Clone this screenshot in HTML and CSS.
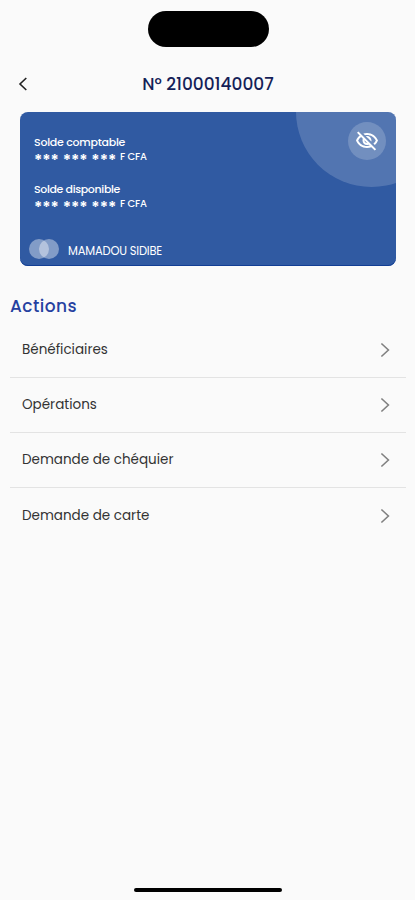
FILE: index.html
```html
<!DOCTYPE html>
<html lang="fr">
<head>
<meta charset="UTF-8">
<meta name="viewport" content="width=device-width, initial-scale=1.0">
<title>N° 21000140007</title>
<link rel="stylesheet" href="styles.css">
</head>
<body>

<div class="screen">
    <div class="island"></div>

    <header class="header">
        <a href="#" class="back" aria-label="Retour">
            <svg width="10" height="14" viewBox="0 0 10 14"><path d="M8.3 1 2 7l6.3 6"/></svg>
        </a>
        <h1>N° 21000140007</h1>
    </header>

    <section class="card">
        <button class="hide-button" aria-label="Afficher le solde">
            <svg width="24" height="24" viewBox="0 0 24 24"><path d="M12 6c3.79 0 7.17 2.13 8.82 5.5-.59 1.22-1.42 2.27-2.41 3.12l1.41 1.41c1.39-1.23 2.49-2.77 3.18-4.53C21.27 7.11 17 4 12 4c-1.27 0-2.49.2-3.64.57l1.65 1.65C10.66 6.09 11.32 6 12 6zm-1.07 1.14L13 9.21c.57.25 1.03.71 1.28 1.28l2.07 2.07c.08-.34.14-.7.14-1.07C16.5 9.01 14.48 7 12 7c-.37 0-.72.05-1.07.14zM2.01 3.87l2.68 2.68C3.06 7.83 1.77 9.53 1 11.5 2.73 15.89 7 19 12 19c1.52 0 2.98-.29 4.32-.82l3.42 3.42 1.41-1.41L3.42 2.45 2.01 3.87zm7.5 7.5 2.61 2.61c-.04.01-.08.02-.12.02-1.38 0-2.5-1.12-2.5-2.5 0-.05.01-.08.01-.13zm-3.4-3.4 1.75 1.75c-.23.55-.36 1.15-.36 1.78 0 2.48 2.02 4.5 4.5 4.5.63 0 1.23-.13 1.77-.36l.98.98c-.88.24-1.8.38-2.75.38-3.79 0-7.17-2.13-8.82-5.5.7-1.43 1.72-2.61 2.93-3.53z"/></svg>
        </button>
        <div class="balance">
            <p class="label">Solde comptable</p>
            <p class="amount"><span class="mask">*** *** ***</span><span class="currency">F CFA</span></p>
        </div>
        <div class="balance">
            <p class="label label-available">Solde disponible</p>
            <p class="amount"><span class="mask">*** *** ***</span><span class="currency">F CFA</span></p>
        </div>
        <div class="owner">
            <span class="circles"><i></i><i></i></span>
            <span class="owner-name">MAMADOU SIDIBE</span>
        </div>
    </section>

    <h2>Actions</h2>
    <nav class="actions">
        <a href="#">Bénéficiaires<svg width="10" height="16" viewBox="0 0 10 16"><path d="m1.4 1.5 7 6.5-7 6.5"/></svg></a>
        <a href="#">Opérations<svg width="10" height="16" viewBox="0 0 10 16"><path d="m1.4 1.5 7 6.5-7 6.5"/></svg></a>
        <a href="#">Demande de chéquier<svg width="10" height="16" viewBox="0 0 10 16"><path d="m1.4 1.5 7 6.5-7 6.5"/></svg></a>
        <a href="#">Demande de carte<svg width="10" height="16" viewBox="0 0 10 16"><path d="m1.4 1.5 7 6.5-7 6.5"/></svg></a>
    </nav>

    <div class="home-bar"></div>
</div>

</body>
</html>
```
FILE: styles.css
```css
* {
    box-sizing: border-box;
}
body {
    margin: 0;
    background-color: #fafafa;
    font-family: Poppins, Inter, sans-serif;
}
h1, h2, p {
    margin: 0;
}
.screen {
    display: flex;
    flex-direction: column;
    height: 900px;
    padding: 11px 9px 8px 10px;
}
.island {
    width: 121px;
    height: 36px;
    margin-left: 138px;
    border-radius: 18px;
    background-color: #000;
}
.header {
    display: grid;
    grid-template-columns: 40px 1fr 40px;
    align-items: center;
    height: 24px;
    margin-top: 25px;
}
.back {
    display: flex;
    padding-left: 8px;
}
svg {
    fill: none;
    stroke: #808080;
    stroke-width: 1.6;
}
.back svg {
    stroke: #222;
}
.header h1 {
    text-align: center;
    font-size: 17px;
    font-weight: 500;
    line-height: 24px;
    color: #151f58;
    white-space: nowrap;
}
.card {
    position: relative;
    flex: none;
    width: 376px;
    height: 154px;
    margin: 16px 0 0 10px;
    padding: 23px 10px 0 14px;
    border-radius: 8px;
    background-color: #305aa2;
    box-shadow: inset 0 -1px 0 #123e94;
    color: #fff;
    overflow: hidden;
}
/* Big light disc cut by the card corner */
.card::before {
    content: "";
    position: absolute;
    top: -76px;
    right: -51px;
    width: 151px;
    height: 151px;
    border-radius: 50%;
    background-color: rgba(255, 255, 255, 0.17);
}
.hide-button {
    position: absolute;
    top: 10px;
    right: 10px;
    display: flex;
    align-items: center;
    justify-content: center;
    width: 38px;
    height: 38px;
    padding: 0;
    border: none;
    border-radius: 50%;
    background-color: rgba(255, 255, 255, 0.19);
}
.hide-button svg {
    fill: #fff;
    stroke: none;
}
.balance {
    height: 47px;
}
.label {
    font-size: 11px;
    font-weight: 500;
    line-height: 15px;
    letter-spacing: -0.25px;
}
.label-available {
    letter-spacing: -0.35px;
}
.amount {
    display: flex;
    height: 15px;
    line-height: 15px;
    white-space: nowrap;
}
.mask {
    width: 86px;
    padding-top: 3px;
    font-size: 16px;
    font-weight: 600;
    letter-spacing: 0;
}
.currency {
    font-size: 10px;
    font-weight: 500;
    line-height: 13px;
    letter-spacing: -0.15px;
}
.owner {
    display: flex;
    align-items: center;
    height: 20px;
    margin: 10px 0 0 -5px;
}
.circles {
    display: flex;
    width: 39px;
}
.circles i {
    width: 20px;
    height: 20px;
    border-radius: 50%;
    background-color: rgba(255, 255, 255, 0.4);
}
.circles i + i {
    margin-left: -10px;
}
.owner-name {
    padding-top: 5px;
    font-size: 11.5px;
    letter-spacing: -0.2px;
}
h2 {
    margin-top: 28px;
    font-size: 17px;
    font-weight: 500;
    line-height: 24px;
    letter-spacing: 0.45px;
    color: #2540a0;
}
.actions {
    margin-top: 5px;
}
.actions a {
    display: flex;
    align-items: center;
    justify-content: space-between;
    height: 55px;
    padding: 0 16px 0 12px;
    border-bottom: 1px solid #e3e3e3;
    color: #333;
    font-size: 13.5px;
    text-decoration: none;
}
.actions a:last-child {
    border-bottom: none;
}
.home-bar {
    width: 148px;
    height: 4px;
    margin: auto 0 0 124px;
    border-radius: 2px;
    background-color: #000;
}
```
